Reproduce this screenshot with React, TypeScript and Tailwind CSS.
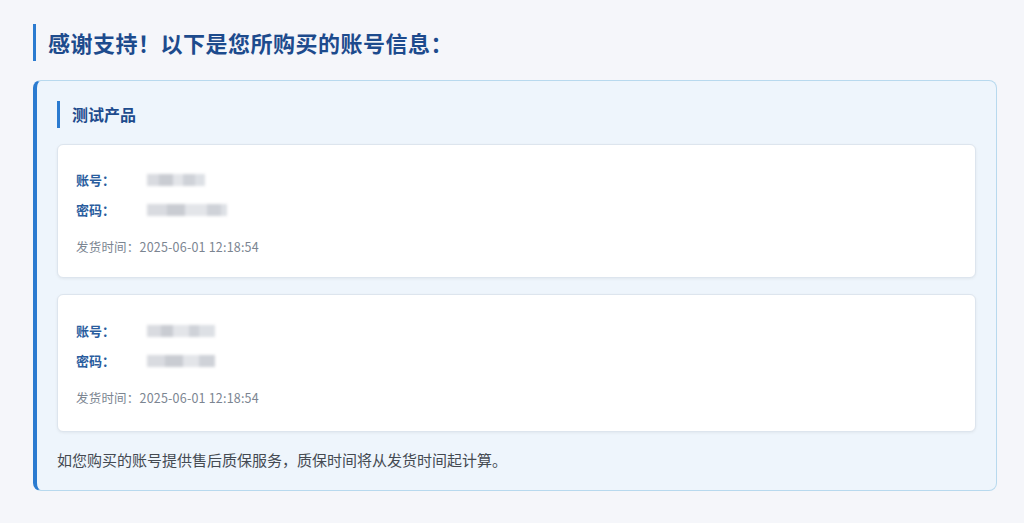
const accounts = [
  { time: '2025-06-01 12:18:54', userW: [12, 14, 10, 12, 10], passW: [20, 18, 22, 14, 6], extra: false },
  { time: '2025-06-01 12:18:54', userW: [14, 12, 16, 10, 16], passW: [18, 18, 16, 16], extra: true },
];

function Masked({ widths }: { widths: number[] }) {
  const shades = ['bg-[#d9dbe0]', 'bg-[#c9ccd2]', 'bg-[#e3e5e9]', 'bg-[#cfd2d8]', 'bg-[#dde0e5]'];
  return (
    <div className="flex h-[12px] blur-[1.5px]">
      {widths.map((w, i) => (
        <div key={i} className={shades[i % shades.length]} style={{ width: w }} />
      ))}
    </div>
  );
}

export default function App() {
  return (
    <div
      className="min-h-[523px] bg-[#f5f6fa] pl-[33px] pr-[27px] pt-6"
      style={{ fontFamily: '"Noto Sans CJK SC", "Noto Sans", sans-serif' }}
    >
      <h1 className="border-l-[3px] border-[#2b7bd0] pl-3 text-[22px] font-bold leading-[37px] tracking-[0.5px] text-[#1d4b8d]">
        感谢支持！以下是您所购买的账号信息：
      </h1>

      <div className="mt-[19px] rounded-lg border border-l-4 border-[#b8d9ee] border-l-[#2b7bd0] bg-[#eef5fc] px-5 pb-5 pt-5">
        <h2 className="border-l-[3px] border-[#2b7bd0] pl-3 text-[16px] font-bold leading-[27px] text-[#1d4b8d]">
          测试产品
        </h2>

        <div className="mt-4 flex flex-col gap-4">
          {accounts.map((a, idx) => (
            <div
              key={idx}
              className={
                'rounded-md border border-[#dde5ee] bg-white px-[18px] pt-5 shadow-[0_1px_3px_rgba(0,0,0,0.06)] ' +
                (a.extra ? 'pb-[23px]' : 'pb-5')
              }
            >
              <div className={'flex h-[30px] items-center ' + (a.extra ? 'mt-px' : '')}>
                <span className="w-[71px] text-[13px] font-bold text-[#2a5d9e]">账号：</span>
                <Masked widths={a.userW} />
              </div>
              <div className="flex h-[30px] items-center">
                <span className="w-[71px] text-[13px] font-bold text-[#2a5d9e]">密码：</span>
                <Masked widths={a.passW} />
              </div>
              <div className="mt-3 text-[12.5px] leading-5 tracking-[0.2px] text-[#7b8591]">发货时间：{a.time}</div>
            </div>
          ))}
        </div>

        <p className="mt-[18px] text-[15px] leading-5 text-[#444a52]">
          如您购买的账号提供售后质保服务，质保时间将从发货时间起计算。
        </p>
      </div>
    </div>
  );
}
